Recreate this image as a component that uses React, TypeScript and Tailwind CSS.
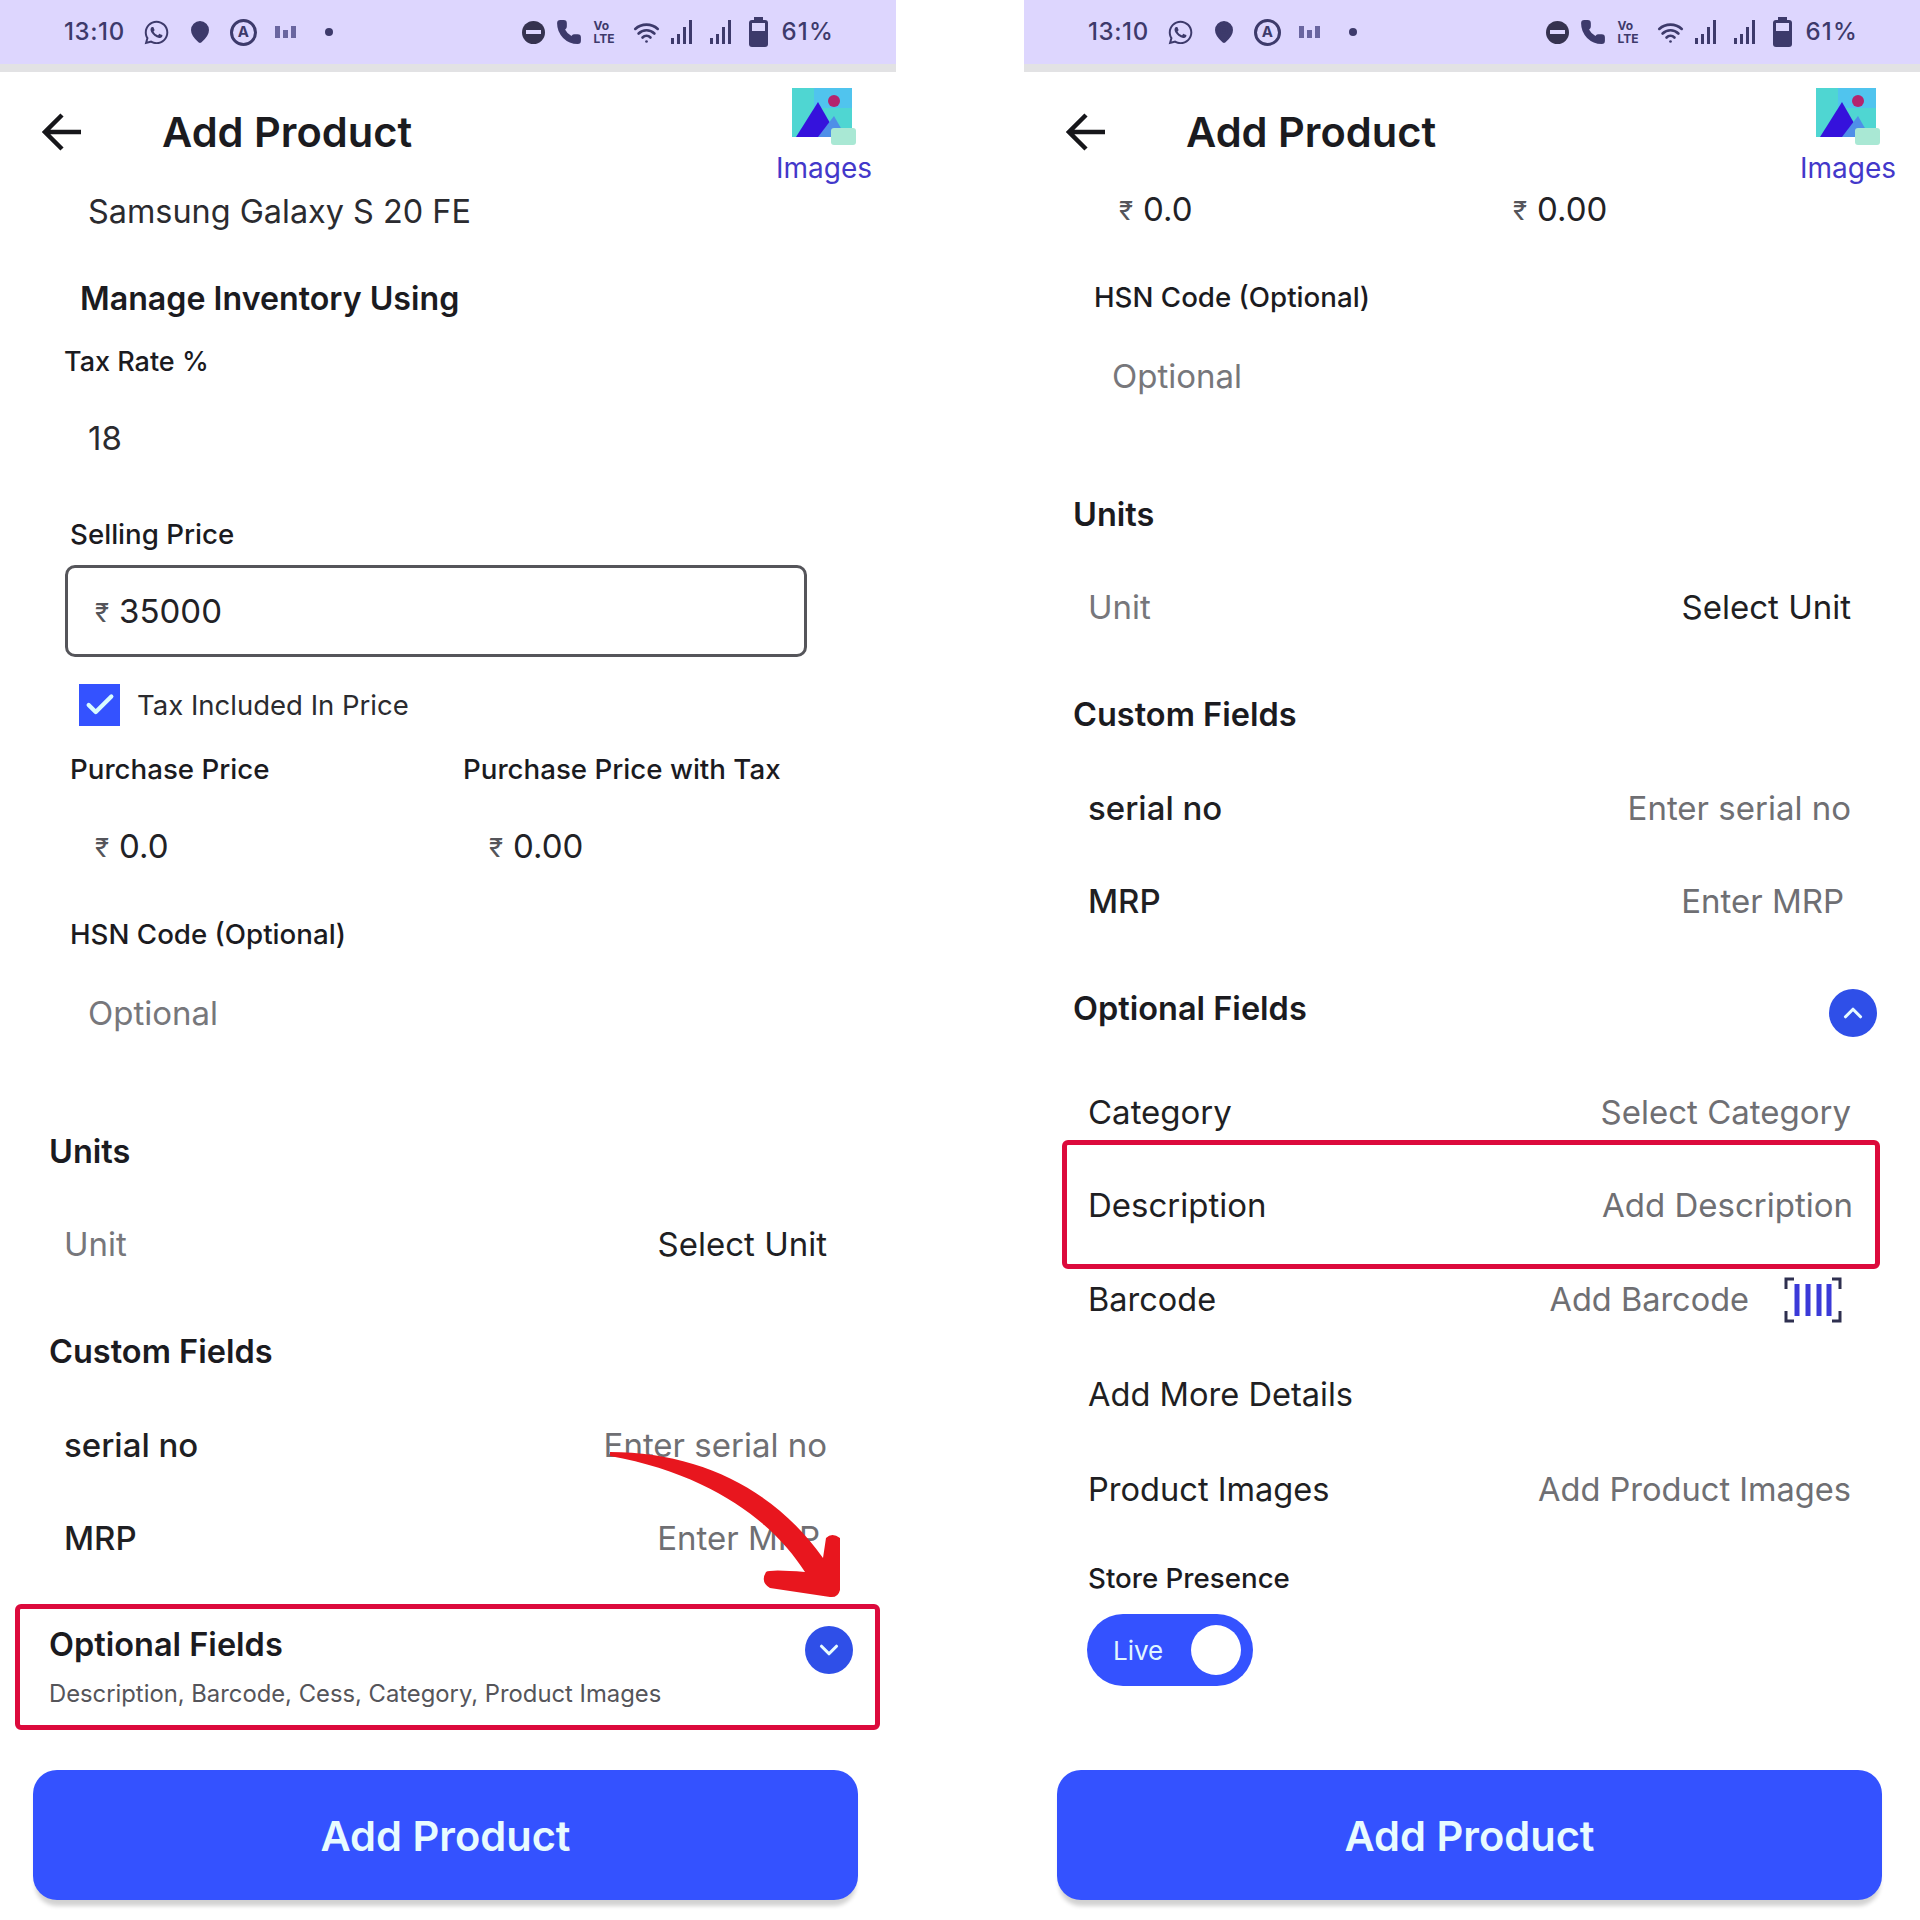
import { FaWhatsapp } from "react-icons/fa";
import { Check, ChevronDown, ChevronUp, MapPin, Phone, Wifi } from "lucide-react";
import type { ReactNode } from "react";

const FieldLabel = ({ children, className = "" }: { children: ReactNode; className?: string }) => (
  <div className={`flex h-[32px] items-center pt-[1px] text-[27.7px] font-medium text-[#1b1b1f] ${className}`}>
    {children}
  </div>
);

const SectionTitle = ({ children, className = "" }: { children: ReactNode; className?: string }) => (
  <div className={`flex h-[42px] items-center pl-[49px] pt-[2px] text-[32.5px] font-semibold text-[#1b1b1f] ${className}`}>
    {children}
  </div>
);

const Amount = ({ value, className = "" }: { value: string; className?: string }) => (
  <div className={`flex h-[48px] items-center pt-[2px] text-[33px] text-[#222226] ${className}`}>
    <span className="mr-[10px] text-[26px] text-[#55555a]">₹</span>
    {value}
  </div>
);

const FormRow = ({
  label,
  value,
  dark = false,
  className = "",
  children,
}: {
  label: string;
  value?: string;
  dark?: boolean;
  className?: string;
  children?: ReactNode;
}) => (
  <div className={`flex h-[48px] items-center justify-between pl-[64px] pr-[69px] pt-[2px] text-[33px] ${className}`}>
    <span className="text-[#1f1f23]">{label}</span>
    <span className={dark ? "text-[#1f1f23]" : "text-[#6f6f73]"}>{value}</span>
    {children}
  </div>
);

const SignalBars = () => (
  <div className="flex h-[24px] w-[28px] items-end gap-[3px]">
    <div className="h-[6px] w-[3px] bg-[#3d3a6b]" />
    <div className="h-[10px] w-[3px] bg-[#3d3a6b]" />
    <div className="h-[17px] w-[3px] bg-[#3d3a6b]" />
    <div className="h-[24px] w-[3px] bg-[#3d3a6b]" />
  </div>
);

const StatusBar = () => (
  <div className="flex h-[72px] items-center justify-between border-b-[8px] border-[#e2e2e4] bg-[#ddd6fe] pl-[64px] pr-[62px] text-[#3d3a6b]">
    <div className="flex items-center gap-[18px]">
      <span className="text-[24px] font-medium tracking-wide">13:10</span>
      <FaWhatsapp size={27} />
      <MapPin size={24} fill="#3d3a6b" stroke="#3d3a6b" />
      <div className="flex h-[27px] w-[27px] items-center justify-center rounded-full border-[3px] border-[#3d3a6b] text-[15px] font-bold">
        A
      </div>
      <div className="flex h-[12px] w-[22px] items-end gap-[3px]">
        <div className="h-[12px] w-[5px] bg-[#6a66a0]" />
        <div className="h-[8px] w-[5px] bg-[#6a66a0]" />
        <div className="h-[12px] w-[5px] bg-[#6a66a0]" />
      </div>
      <div className="ml-[10px] h-[8px] w-[8px] rounded-full bg-[#3d3a6b]" />
    </div>
    <div className="flex items-center gap-[11px]">
      <div className="flex h-[23px] w-[23px] items-center justify-center rounded-full bg-[#35324f]">
        <div className="h-[4px] w-[15px] bg-[#ddd6fe]" />
      </div>
      <Phone size={26} fill="#3d3a6b" />
      <div className="flex w-[29px] flex-col text-[12px] font-bold leading-[13px]">
        <span>Vo</span>
        <span>LTE</span>
      </div>
      <Wifi size={27} strokeWidth={2.4} />
      <SignalBars />
      <SignalBars />
      <svg width="19" height="30" viewBox="0 0 19 30" fill="#3d3a6b">
        <rect x="5" y="0" width="9" height="4" />
        <rect x="0" y="3" width="19" height="27" rx="3" />
        <rect x="3" y="6" width="13" height="8" fill="#ddd6fe" />
      </svg>
      <span className="ml-[2px] text-[24px] font-medium tracking-wider">61%</span>
    </div>
  </div>
);

const ImagesIcon = () => (
  <svg width="64" height="57" viewBox="0 0 64 57">
    <rect x="0" y="0" width="60" height="49" fill="#4fd6d2" />
    <rect x="22" y="0" width="38" height="20" fill="#50c4ee" />
    <circle cx="42" cy="13" r="6" fill="#b4246e" />
    <path d="M4 49 L26 14 L46 49 Z" fill="#3512dc" />
    <path d="M26 49 L42 28 L54 49 Z" fill="#4f8fe8" />
    <rect x="39" y="40" width="25" height="17" rx="3" fill="#a9e8d4" />
  </svg>
);

const Header = () => (
  <div className="flex h-[118px] shrink-0 items-start">
    <svg className="ml-[42px] mt-[40px]" width="40" height="40" viewBox="0 0 40 40" fill="none" stroke="#16161a" strokeWidth="4.5">
      <path d="M39 20H4M20 3L3 20L20 37" />
    </svg>
    <div className="ml-[80px] mt-[36px] text-[41.6px] font-semibold leading-[48px] text-[#1b1b1f]">Add Product</div>
    <div className="ml-auto mr-[24px] mt-[16px] flex flex-col items-center">
      <ImagesIcon />
      <span className="mt-[4px] text-[28px] leading-[38px] text-[#4338ca]">Images</span>
    </div>
  </div>
);

const Footer = () => (
  <div className="flex h-[150px] shrink-0 items-end pb-[20px] pl-[33px] pr-[38px]">
    <button className="h-[130px] w-full rounded-[24px] bg-[#3452ff] pt-[3px] text-[41.6px] font-semibold text-[#e8fbff] shadow-[0_8px_4px_-2px_rgba(0,0,0,0.18)]">
      Add Product
    </button>
  </div>
);

// shared between both screens, the right one is just scrolled further down
const HsnAndUnits = () => (
  <>
    <FieldLabel className="mt-[48px] pl-[70px]">HSN Code (Optional)</FieldLabel>
    <div className="mt-[39px] flex h-[48px] items-center pl-[88px] pt-[1px] text-[33px] text-[#77777b]">Optional</div>
    <SectionTitle className="mt-[93px]">Units</SectionTitle>
    <FormRow label="Unit" value="Select Unit" dark className="mt-[48px] [&>span:first-child]:text-[#77777b]" />
    <SectionTitle className="mt-[62px]">Custom Fields</SectionTitle>
    <FormRow label="serial no" value="Enter serial no" className="mt-[49px] font-medium [&>span:last-child]:font-normal" />
    <FormRow label="MRP" value="Enter MRP" className="mt-[45px] !pr-[76px] font-medium [&>span:last-child]:font-normal" />
  </>
);

const CurvedArrow = () => (
  <svg className="absolute left-[600px] top-[1440px]" width="260" height="170" viewBox="0 0 260 170">
    <path
      d="M10 12 C100 12 175 50 223 118 L226 98 Q232 92 240 98 L240 150 Q238 158 230 157 L170 148 Q160 142 166 132 Q170 129 205 132 C175 85 115 35 10 16 Z"
      fill="#e8161e"
    />
  </svg>
);

const LeftScreen = () => (
  <div className="relative flex h-[1920px] w-[896px] flex-col overflow-hidden">
    <StatusBar />
    <Header />
    <div className="min-h-0 flex-1 overflow-hidden">
      <div className="flex h-[44px] items-center pl-[88px] text-[32.4px] text-[#2b2b2f]">Samsung Galaxy S 20 FE</div>
      <div className="mt-[40px] flex h-[50px] items-center pl-[80px] text-[32.2px] font-semibold text-[#1b1b1f]">
        Manage Inventory Using
      </div>
      <FieldLabel className="mt-[22px] pl-[64px] !text-[27px]">Tax Rate %</FieldLabel>
      <div className="mt-[36px] flex h-[48px] items-center pl-[88px] pt-[2px] text-[33px] text-[#2b2b2f]">18</div>
      <FieldLabel className="mt-[56px] pl-[70px]">Selling Price</FieldLabel>
      <div className="ml-[65px] mt-[15px] flex h-[92px] w-[742px] items-center rounded-[10px] border-[3px] border-[#55555a] pl-[27px]">
        <Amount value="35000" />
      </div>
      <div className="ml-[79px] mt-[27px] flex h-[42px] items-center">
        <div className="flex h-[42px] w-[41px] items-center justify-center bg-[#3452ff]">
          <Check size={34} strokeWidth={3} color="#d8fbff" />
        </div>
        <span className="ml-[17px] pt-[2px] text-[27.5px] text-[#2b2b2f]">Tax Included In Price</span>
      </div>
      <div className="mt-[27px] flex pl-[70px]">
        <FieldLabel className="w-[393px]">Purchase Price</FieldLabel>
        <FieldLabel>Purchase Price with Tax</FieldLabel>
      </div>
      <div className="mt-[37px] flex pl-[95px]">
        <Amount value="0.0" className="w-[394px]" />
        <Amount value="0.00" />
      </div>
      <HsnAndUnits />
      <div className="ml-[15px] mt-[42px] h-[126px] w-[865px] rounded-[6px] border-[5px] border-[#dc0a3c] pl-[29px] pr-[22px]">
        <div className="flex h-[72px] items-center justify-between">
          <span className="text-[32.5px] font-semibold text-[#1b1b1f]">Optional Fields</span>
          <div className="mt-[10px] flex h-[48px] w-[48px] items-center justify-center rounded-full bg-[#2f4fe8]">
            <ChevronDown size={30} color="#e8fbff" strokeWidth={2.5} />
          </div>
        </div>
        <div className="text-[23.8px] leading-[26px] text-[#55555a]">Description, Barcode, Cess, Category, Product Images</div>
      </div>
    </div>
    <Footer />
    <CurvedArrow />
  </div>
);

const RightScreen = () => (
  <div className="relative flex h-[1920px] w-[896px] flex-col overflow-hidden">
    <StatusBar />
    <Header />
    <div className="min-h-0 flex-1 overflow-hidden">
      <div className="-mt-[5px] flex pl-[95px]">
        <Amount value="0.0" className="w-[394px]" />
        <Amount value="0.00" />
      </div>
      <HsnAndUnits />
      <div className="mt-[60px] flex h-[48px] items-center justify-between pl-[49px] pr-[43px]">
        <span className="text-[32.5px] font-semibold text-[#1b1b1f]">Optional Fields</span>
        <div className="mt-[8px] flex h-[48px] w-[48px] items-center justify-center rounded-full bg-[#2f4fe8]">
          <ChevronUp size={30} color="#e8fbff" strokeWidth={2.5} />
        </div>
      </div>
      <FormRow label="Category" value="Select Category" className="mt-[55px]" />
      <div className="mt-[4px]">
        <FormRow
          label="Description"
          value="Add Description"
          className="ml-[38px] !h-[129px] w-[818px] rounded-[6px] border-[5px] border-[#dc0a3c] !pl-[21px] !pr-[22px]"
        />
      </div>
      <div className="mt-[6px] flex h-[48px] items-center justify-between pl-[64px] pr-[78px] pt-[2px] text-[32.5px]">
        <span className="text-[#1f1f23]">Barcode</span>
        <div className="flex items-center gap-[35px]">
          <span className="text-[#6f6f73]">Add Barcode</span>
          <svg width="58" height="46" viewBox="0 0 58 46" fill="none" stroke="#3b3ad8">
            <path d="M2 12V2H10M48 2H56V12M2 34V44H10M48 44H56V34" stroke="#2f3050" strokeWidth="3" />
            <path d="M13 7V39M24 7V39M35 7V39M45 7V39" strokeWidth="5" />
          </svg>
        </div>
      </div>
      <FormRow label="Add More Details" className="mt-[46px] !text-[32.6px]" />
      <FormRow label="Product Images" value="Add Product Images" className="mt-[47px] !text-[32.6px]" />
      <div className="mt-[51px] flex h-[32px] items-center pl-[64px] text-[27.7px] font-medium text-[#1b1b1f]">Store Presence</div>
      <div className="ml-[63px] mt-[19px] flex h-[72px] w-[166px] items-center justify-between rounded-full bg-[#3452ff] pl-[26px] pr-[12px]">
        <span className="text-[26px] text-[#e0f6ff]">Live</span>
        <div className="h-[50px] w-[50px] rounded-full bg-white" />
      </div>
    </div>
    <Footer />
  </div>
);

export default function App() {
  return (
    <div className="flex h-[1920px] w-[1920px] justify-between overflow-hidden bg-white font-['Inter',sans-serif]">
      <LeftScreen />
      <RightScreen />
    </div>
  );
}
